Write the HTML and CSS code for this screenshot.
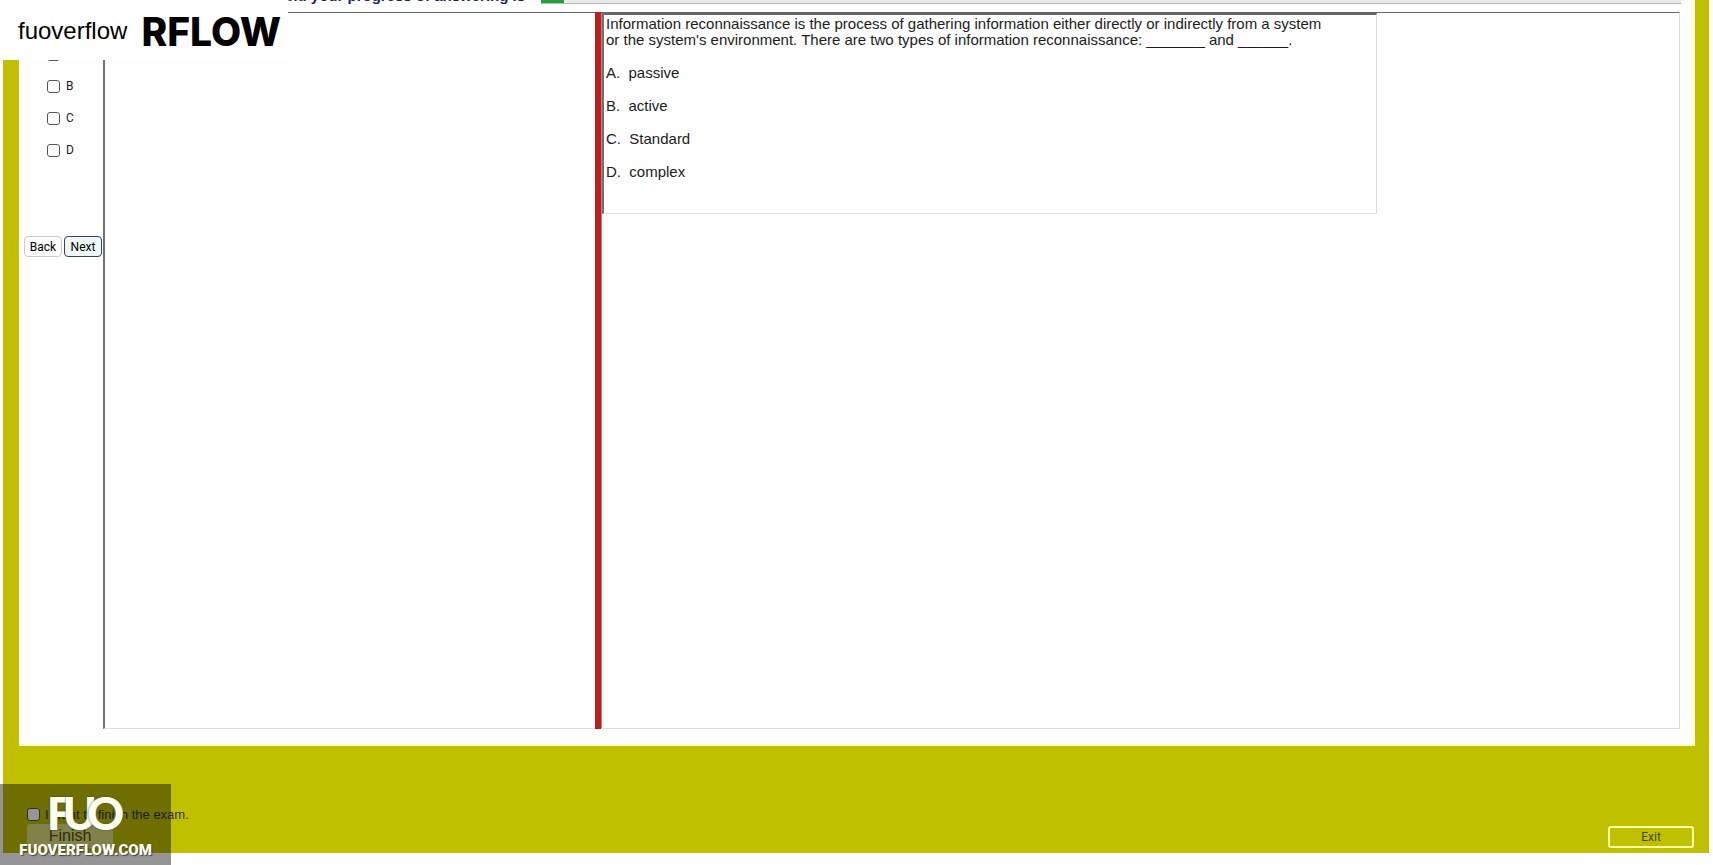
FILE: index.html
```html
<!DOCTYPE html>
<html lang="en">
<head>
    <meta charset="UTF-8">
    <meta name="viewport" content="width=device-width, initial-scale=1.0">
    <title>Exam</title>
    <link rel="stylesheet" href="styles.css">
</head>
<body>

    <main class="exam">
        <div class="panel">
            <!-- Progress -->
            <div class="progress-row">
                <span class="progress-label" id="progress-label">and your progress of answering is</span>
                <div class="progress" role="progressbar" aria-labelledby="progress-label" aria-valuenow="2">
                    <div class="progress-bar" style="width: 2%"></div>
                </div>
            </div>

            <div class="workspace">
                <!-- Answer choices -->
                <form class="answers">
                    <label class="choice"><input type="checkbox"> A</label>
                    <label class="choice"><input type="checkbox"> B</label>
                    <label class="choice"><input type="checkbox"> C</label>
                    <label class="choice"><input type="checkbox"> D</label>
                    <div class="nav-buttons">
                        <button type="button" class="btn">Back</button>
                        <button type="button" class="btn btn-next">Next</button>
                    </div>
                </form>

                <div class="viewer">
                    <div class="notes"></div>
                    <div class="splitter"></div>
                    <!-- Question -->
                    <div class="question-pane">
                        <div class="question">
                            <p>Information reconnaissance is the process of gathering information either directly or indirectly from a system<br>or the system's environment. There are two types of information reconnaissance: _______ and ______.</p>
                            <p>A.&nbsp; passive</p>
                            <p>B.&nbsp; active</p>
                            <p>C.&nbsp; Standard</p>
                            <p>D.&nbsp; complex</p>
                        </div>
                    </div>
                </div>
            </div>
        </div>

        <!-- Finish and exit -->
        <footer class="exam-footer">
            <div class="finish">
                <label class="finish-label"><input type="checkbox"> I want to finish the exam.</label>
                <button type="button" class="btn-finish">Finish</button>
            </div>
            <button type="button" class="btn-exit">Exit</button>
        </footer>
    </main>

    <header class="brand">
        <span class="brand-name">fuoverflow</span>
        <span class="brand-title">RFLOW</span>
    </header>

    <div class="watermark">
        <div class="watermark-logo"><span>F</span><span class="logo-u">U</span><span class="logo-o">O</span></div>
        <div class="watermark-site">FUOVERFLOW.COM</div>
    </div>

</body>
</html>
```

FILE: styles.css
```css
/* General Styling */
* {
    box-sizing: border-box;
}

body {
    margin: 0;
    background-color: #fff;
    color: #1c1c1c;
    font-family: "Liberation Sans", Arial, sans-serif;
    overflow: hidden;
}

button {
    font-family: inherit;
    padding: 0;
}

input[type="checkbox"] {
    appearance: none;
    width: 13px;
    height: 13px;
    margin: 0;
    border: 1px solid #555;
    border-radius: 3px;
    background-color: #fff;
}

.exam {
    display: flex;
    flex-direction: column;
    height: calc(100vh - 12px);
    margin: 0 4px 0 3px;
    padding: 0 14px 0 16px;
    background-color: #bfc000;
}

.panel {
    flex: 1;
    display: flex;
    flex-direction: column;
    padding-bottom: 15px;
    background-color: #fefefe;
    border: 2px solid #ffffc8;
    border-width: 0 2px 2px 0;
}

/* Progress */
.progress-row {
    display: flex;
    align-items: flex-end;
    height: 4px;
    margin: 0 12px 8px 261px;
}

.progress-label {
    flex: none;
    width: 261px;
    color: #1c1c70;
    font-size: 15px;
    font-weight: bold;
    line-height: 16px;
    white-space: nowrap;
}

.progress {
    flex: 1;
    height: 16px;
    border-bottom: 1px solid #bbb;
    background-color: #e8e8e8;
}

.progress-bar {
    height: 100%;
    background-color: #24a03c;
}

/* Workspace */
.workspace {
    flex: 1;
    display: flex;
    margin-right: 13px;
}

.answers {
    width: 84px;
    padding-top: 26px;
}

.choice {
    display: flex;
    align-items: center;
    gap: 6px;
    height: 32px;
    padding-left: 28px;
    font-family: Roboto, sans-serif;
    font-size: 12px;
}

.nav-buttons {
    display: flex;
    gap: 2px;
    margin-top: 70px;
    padding-left: 5px;
}

.btn {
    width: 38px;
    height: 21px;
    border: 1px solid #ccc;
    border-radius: 4px;
    background-color: #fcfcfc;
    font-family: Roboto, sans-serif;
    font-size: 12px;
}

.btn-next {
    border: 1px solid #345;
    background-color: #eef6f8;
}

.viewer {
    flex: 1;
    display: flex;
    border: 1px solid #ddd;
    border-top: 1px solid #666;
    border-left: 2px solid #707070;
}

.notes {
    flex: 0 0 490px;
}

.splitter {
    width: 6px;
    margin: -1px 0;
    background-color: #bf1e1c;
}

.question-pane {
    flex: 1;
    border-left: 1px solid #a88;
}

.question {
    width: 72%;
    height: 201px;
    padding: 1px 2px;
    border: 1px solid #ddd;
    border-top: 2px solid #666;
    border-left: 2px solid #707070;
    font-size: 15px;
    line-height: 16px;
    white-space: nowrap;
}

.question p {
    margin: 0 0 17px;
}

/* Footer */
.exam-footer {
    display: flex;
    justify-content: space-between;
    align-items: flex-end;
    height: 107px;
    padding: 0 1px 5px 8px;
}

.finish-label {
    display: flex;
    align-items: center;
    gap: 5px;
    margin-bottom: 2px;
    color: #333;
    font-size: 13px;
}

.btn-finish {
    width: 86px;
    height: 24px;
    border: 0;
    border-radius: 3px;
    background-color: #dede80;
    color: #555500;
    font-size: 16px;
}

.btn-exit {
    width: 86px;
    height: 22px;
    border: 2px solid #ffffa8;
    border-radius: 3px;
    background-color: transparent;
    color: #444400;
    font-family: Roboto, sans-serif;
    font-size: 12px;
}

/* Overlays */
.brand {
    position: absolute;
    top: 0;
    left: 0;
    display: flex;
    align-items: center;
    gap: 14px;
    width: 288px;
    height: 60px;
    padding: 2px 0 0 18px;
    background-color: #fff;
    color: #000;
}

.brand-name {
    font-size: 24px;
}

.brand-title {
    font-family: Inter, sans-serif;
    font-size: 39px;
    font-weight: 800;
}

.watermark {
    position: absolute;
    bottom: 0;
    left: 0;
    width: 171px;
    height: 81px;
    padding-top: 8px;
    background-color: rgba(0, 0, 0, 0.42);
    color: #fffff0;
    text-align: center;
}

.watermark-logo {
    font-family: Lato, sans-serif;
    font-size: 46px;
    font-weight: 900;
    line-height: 42px;
    text-shadow: 0 0 2px #444;
}

.logo-u, .logo-o {
    margin-left: -10px;
}

.watermark-site {
    font-family: Roboto, sans-serif;
    font-size: 15px;
    font-weight: 900;
    line-height: 32px;
    text-shadow: 1px 1px 1px #444;
}
```
